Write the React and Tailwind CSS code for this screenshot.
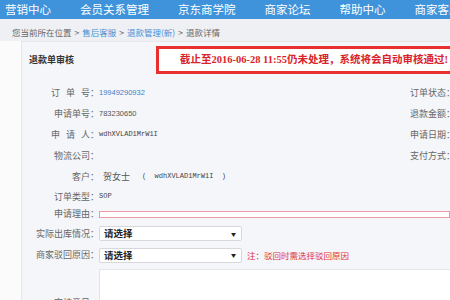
import React from 'react'

const navItems = ['营销中心', '会员关系管理', '京东商学院', '商家论坛', '帮助中心', '商家客服']

function Label({ children, className = '' }) {
  return (
    <div className={`w-[77px] shrink-0 text-right text-[9px] text-[#666] whitespace-nowrap ${className}`}>
      {children}
    </div>
  )
}

function Select({ className = '' }) {
  return (
    <div className={`w-[143px] h-[15px] bg-white border border-[#d6d8dc] rounded-[2px] flex items-center justify-between pl-[4px] pr-[5px] ${className}`}>
      <span className="text-[9.5px] font-bold text-[#222]">请选择</span>
      <span className="text-[5px] text-[#222]">▼</span>
    </div>
  )
}

export default function App() {
  return (
    <div className="w-[450px] h-[300px] overflow-hidden bg-[#fbfbfc] font-['Noto_Sans_CJK_SC','Liberation_Sans',sans-serif]">
      {/* top nav */}
      <nav className="h-[19px] bg-[#3f93db] flex items-center pl-[5px] gap-[29px] text-white text-[11.5px] font-normal whitespace-nowrap">
        {navItems.map((item) => (
          <span key={item}>{item}</span>
        ))}
      </nav>

      {/* breadcrumb */}
      <div className="h-[22px] bg-[#eef0f3] pl-[12px] pt-[5px] flex items-center text-[8.5px] text-[#666] whitespace-nowrap">
        <span>您当前所在位置</span>
        <span className="mx-[3px]">&gt;</span>
        <span className="text-[#4a8fd4]">售后客服</span>
        <span className="mx-[3px]">&gt;</span>
        <span className="text-[#4a8fd4]">退款管理(新)</span>
        <span className="mx-[3px]">&gt;</span>
        <span>退款详情</span>
      </div>

      <div className="flex">
        <div className="w-[21px] shrink-0" />
        <div className="flex-1 h-[259px] bg-[#f4f6fa] border-l border-t border-[#e6e8ec]">
          {/* header */}
          <div className="flex items-center pt-[4px]">
            <div className="w-[134px] shrink-0 pl-[7px] text-[9px] font-bold text-[#333]">退款单审核</div>
            <div className="flex-1 h-[28px] bg-white border-[3px] border-r-0 border-[#e8312f] flex items-center pl-[21px] whitespace-nowrap">
              <span className="text-[10.5px] font-bold text-[#d9232a] font-['Liberation_Serif','Noto_Sans_CJK_SC',serif]">
                截止至2016-06-28 11:55仍未处理，系统将会自动审核通过!
              </span>
            </div>
          </div>

          {/* info rows */}
          <div className="mt-[8px]">
            <div className="h-[21px] flex items-center">
              <Label>
                <span className="tracking-[6px]">订单</span>号：
              </Label>
              <span className="flex-1 text-[7.5px] text-[#3b7fc6] font-['Liberation_Sans',sans-serif]">19949290932</span>
              <span className="w-[40px] shrink-0 text-[9px] text-[#666] whitespace-nowrap">订单状态：</span>
            </div>
            <div className="h-[21px] flex items-center">
              <Label>申请单号：</Label>
              <span className="flex-1 text-[7.5px] text-[#555] font-['Liberation_Sans',sans-serif]">783230650</span>
              <span className="w-[40px] shrink-0 text-[9px] text-[#666] whitespace-nowrap">退款金额：</span>
            </div>
            <div className="h-[21px] flex items-center">
              <Label>
                <span className="tracking-[6px]">申请</span>人：
              </Label>
              <span className="flex-1 text-[7px] text-[#444] font-['Liberation_Mono',monospace]">wdhXVLAD1MrW1I</span>
              <span className="w-[40px] shrink-0 text-[9px] text-[#666] whitespace-nowrap">申请日期：</span>
            </div>
            <div className="h-[21px] flex items-center">
              <Label>物流公司：</Label>
              <span className="flex-1" />
              <span className="w-[40px] shrink-0 text-[9px] text-[#666] whitespace-nowrap">支付方式：</span>
            </div>
            <div className="h-[21px] flex items-center">
              <Label>客户：</Label>
              <span className="text-[9px] text-[#555] ml-[4px]">贺女士</span>
              <span className="text-[7px] text-[#444] ml-[12px] font-['Liberation_Mono',monospace] whitespace-pre">(  wdhXVLAD1MrW1I  )</span>
            </div>
            <div className="h-[19px] flex items-center">
              <Label>订单类型：</Label>
              <span className="text-[7px] text-[#444] font-['Liberation_Mono',monospace]">SOP</span>
            </div>
            <div className="h-[16px] flex items-center">
              <Label>申请理由：</Label>
              <div className="flex-1 h-[7px] bg-white border border-[#ee9aa5]" />
            </div>
            <div className="h-[21px] flex items-center mt-[1px]">
              <Label className="text-[9.5px]">实际出库情况：</Label>
              <Select />
            </div>
            <div className="h-[22px] flex items-center">
              <Label className="text-[9.5px]">商家驳回原因：</Label>
              <Select />
              <span className="ml-[5px] text-[8.5px] text-[#e0343a] whitespace-nowrap">注：驳回时需选择驳回原因</span>
            </div>
            <div className="flex mt-[3px]">
              <Label className="pt-[27px]">审核意见：</Label>
              <div className="flex-1 h-[40px] bg-white border-t border-l border-[#e3e5e8]" />
            </div>
          </div>
        </div>
      </div>
    </div>
  )
}
